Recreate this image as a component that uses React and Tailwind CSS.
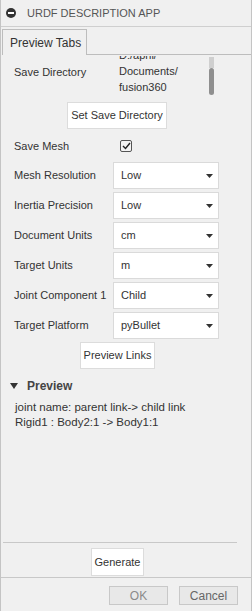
import React from "react";

const rows = [
  ["Mesh Resolution", "Low"],
  ["Inertia Precision", "Low"],
  ["Document Units", "cm"],
  ["Target Units", "m"],
  ["Joint Component 1", "Child"],
  ["Target Platform", "pyBullet"],
];

const Caret = () => (
  <svg width="7" height="4" viewBox="0 0 7 4" className="absolute right-[5px] top-[11px]">
    <path d="M0 0h7L3.5 4z" fill="#333" />
  </svg>
);

const App = () => {
  return (
    <div
      className="w-[252px] h-[611px] bg-[#f0f0f0] border-x border-[#c4c4c4] flex flex-col text-[11px] text-[#333] overflow-hidden"
      style={{ fontFamily: '"Liberation Sans", Arial, sans-serif' }}
    >
      {/* title */}
      <div className="h-[27px] flex items-center border-b border-[#cfcfcf] shrink-0">
        <div className="ml-[5px] w-[10px] h-[10px] rounded-full bg-[#333] flex items-center justify-center">
          <div className="w-[6px] h-[2px] bg-white" />
        </div>
        <span className="ml-[11px] text-[11px] text-[#555]">URDF DESCRIPTION APP</span>
      </div>

      {/* tabs */}
      <div className="flex h-[26px] mt-[2px] shrink-0">
        <div className="w-[85px] border border-b-0 border-[#bdbdbd] flex items-center pl-[7px] text-[12px] text-[#333] ml-[1px]">
          Preview Tabs
        </div>
        <div className="flex-1 border-b border-[#bdbdbd]" />
      </div>

      {/* content */}
      <div className="flex-1 flex flex-col">
        <div className="flex h-[40px] mt-[1px]">
          <span className="ml-[13px] w-[104px] mt-[8px]">Save Directory</span>
          <div className="relative h-[40px] w-[100px] overflow-hidden">
            <div className="leading-[16px] -mt-[9px] ml-[1px]">
              <div>D:/aphi/</div>
              <div>Documents/</div>
              <div>fusion360</div>
            </div>
          </div>
          <div className="w-[5px] h-[38px] flex flex-col ml-[-9px] mt-[1px]">
            <div className="h-[11px] bg-[#cfcfcf]" />
            <div className="flex-1 bg-[#8f8f8f] rounded-[3px]" />
          </div>
        </div>

        <div className="flex justify-center mt-[6px]">
          <button className="h-[27px] px-[3px] bg-white border border-[#dcdcdc] text-[11px] ml-[-18px]">
            Set Save Directory
          </button>
        </div>

        <div className="flex items-center h-[16px] mt-[9px]">
          <span className="ml-[13px] w-[106px]">Save Mesh</span>
          <div className="w-[12px] h-[12px] border border-[#555] rounded-[2px] bg-[#f4f4f4] flex items-center justify-center">
            <svg width="9" height="8" viewBox="0 0 9 8">
              <path d="M1 4l2.5 2.5L8 1" stroke="#222" strokeWidth="1.4" fill="none" />
            </svg>
          </div>
        </div>

        <div className="flex flex-col gap-[3px] mt-[8px]">
          {rows.map(([label, value]) => (
            <div key={label} className="flex items-center h-[27px]">
              <span className="ml-[13px] w-[99px] whitespace-nowrap">{label}</span>
              <div className="relative w-[106px] h-[27px] bg-white border border-[#dadada] flex items-center pl-[7px]">
                {value}
                <Caret />
              </div>
            </div>
          ))}
        </div>

        <div className="flex justify-center mt-[3px]">
          <button className="h-[27px] px-[3px] bg-white border border-[#dcdcdc] text-[11px] ml-[-17px]">
            Preview Links
          </button>
        </div>

        <div className="flex items-center mt-[10px] h-[13px]">
          <svg width="8" height="6" viewBox="0 0 8 6" className="ml-[9px]">
            <path d="M0 0h8L4 6z" fill="#333" />
          </svg>
          <span className="ml-[9px] font-bold text-[12px] text-[#444]">Preview</span>
        </div>

        <div className="mt-[8px] ml-[14px] leading-[15px] text-[11.5px] text-[#333]">
          <div>joint name: parent link-&gt; child link</div>
          <div>Rigid1 : Body2:1 -&gt; Body1:1</div>
        </div>

        <div className="flex-1" />
        <div className="border-t border-[#c8c8c8] ml-[2px] mr-[14px]" />
        <div className="flex justify-center mt-[5px] mb-[1px]">
          <button className="h-[28px] px-[3px] bg-white border border-[#dcdcdc] text-[11px] ml-[-17px]">
            Generate
          </button>
        </div>
      </div>

      <div className="border-t border-[#c8c8c8] h-[34px] shrink-0 flex items-start justify-end pt-[8px] pr-[13px] gap-[11px]">
        <button className="w-[59px] h-[19px] border border-[#c8c8c8] bg-[#e8e8e8] text-[#8a8a8a] text-[12px]">OK</button>
        <button className="w-[59px] h-[19px] border border-[#c8c8c8] bg-[#e8e8e8] text-[#666] text-[12px]">Cancel</button>
      </div>
    </div>
  );
};

export default App;
